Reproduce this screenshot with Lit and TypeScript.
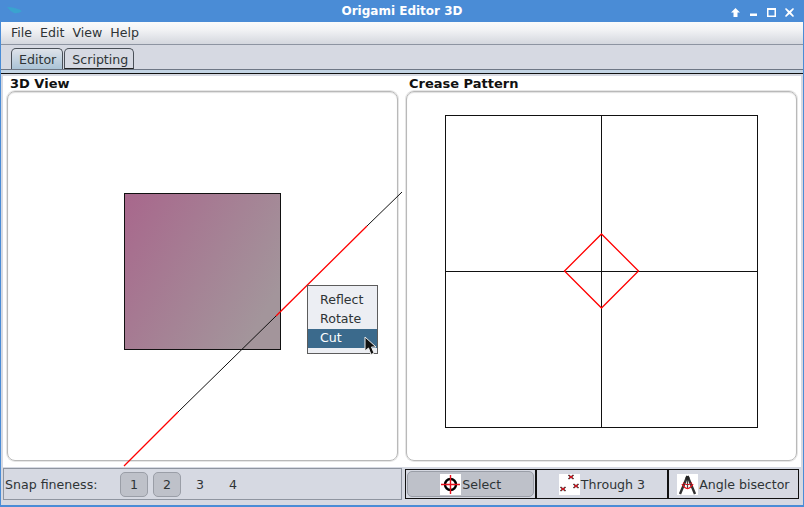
import { LitElement, html, css, svg } from 'lit';
import { customElement } from 'lit/decorators.js';

// icons are small raster-like pictures on a white square in the original
const selectIcon = html`<svg class="icon" width="21" height="21" viewBox="0 0 21 21">
  <rect width="21" height="21" fill="#fff" />
  <circle cx="10.5" cy="10.5" r="5.5" fill="none" stroke="#000" stroke-width="2.4" />
  <path d="M10.5 1V20M1 10.5H20" stroke="#e8101c" stroke-width="1.4" />
</svg>`;

const throughIcon = html`<svg class="icon" width="21" height="21" viewBox="0 0 21 21">
  <rect width="21" height="21" fill="#fff" />
  <path d="M9.500 1l5 4M14.500 1l-5 4M14.500 10l5 4M19.500 10l-5 4M1.500 13l5 4M6.500 13l-5 4" stroke="#222" stroke-width="1.600" />
  <path d="M10 1.500l4 3M14 1.500l-4 3M15 10.500l4 3M19 10.500l-4 3M2 13.500l4 3M6 13.500l-4 3" stroke="#e8101c" stroke-width="1" />
</svg>`;

const bisectorIcon = html`<svg class="icon" width="21" height="21" viewBox="0 0 21 21">
  <rect width="21" height="21" fill="#fff" />
  <path d="M10.500 2L3 20M10.500 2L18 20" stroke="#333" stroke-width="2.400" fill="none" />
  <path d="M10.500 2V14" stroke="#444" stroke-width="1.200" />
  <circle cx="10.500" cy="4" r="2" fill="#222" />
  <path d="M5 10Q10.500 19 16 10" stroke="#e8101c" stroke-width="1.400" fill="none" />
  <path d="M6 8.500Q10.500 13 15 8.500" stroke="#e8101c" stroke-width="1" fill="none" />
</svg>`;

@customElement('context-menu')
class ContextMenu extends LitElement {
  static styles = css`
    :host {
      background: #eceef3;
      border: 1px solid #5c5c5c;
      box-sizing: border-box;
      display: block;
      height: 69px;
      left: 299px;
      padding-top: 5px;
      position: absolute;
      top: 193px;
      width: 71px;
    }

    div {
      color: #2e3436;
      height: 19px;
      line-height: 17px;
      padding-left: 12px;
    }

    .active {
      background: #3b6a8c;
      color: #fff;
    }

    svg {
      left: 56px;
      position: absolute;
      top: 50px;
    }
  `;

  render() {
    return html`
      <div>Reflect</div>
      <div>Rotate</div>
      <div class="active">Cut</div>
      <svg width="14" height="20" viewBox="0 0 14 20">
        <path d="M1 1V15L4.500 12L7 18.500L10 17L7.500 11H12Z" fill="#111" stroke="#eee" stroke-width="1" />
      </svg>
    `;
  }
}

@customElement('app-root')
export class AppRoot extends LitElement {
  static styles = css`
    :host {
      background: #4a8cd6;
      color: #2e3436;
      display: block;
      font-family: 'DejaVu Sans', sans-serif;
      font-size: 12.6px;
      height: 507px;
      overflow: hidden;
      width: 804px;
    }

    .title {
      align-items: center;
      color: #fff;
      display: flex;
      font-size: 12px;
      font-weight: bold;
      height: 22px;
      justify-content: center;
      position: relative;
    }

    .logo {
      left: 6px;
      position: absolute;
      top: 6px;
    }

    .controls {
      position: absolute;
      right: 10px;
      top: 8px;
    }

    .window {
      background: #d6d9e2;
      height: 483px;
      margin: 0 1px;
    }

    .menu {
      background: linear-gradient(#fafbfb, #f2f3f5 35%, #d4d7de);
      border-bottom: 1px solid #8d94a1;
      display: flex;
      gap: 8px;
      height: 22px;
      line-height: 21px;
      padding-left: 10px;
    }

    .tabs {
      border-bottom: 1px solid #6e7785;
      box-sizing: border-box;
      display: flex;
      gap: 1px;
      height: 25px;
      padding: 3px 0 0 10px;
    }

    .tab {
      background: #d6d9e2;
      border: 1px solid #4a5058;
      border-bottom: 1px solid #222;
      border-radius: 5px 5px 0 0;
      box-sizing: border-box;
      color: #2e3436;
      height: 21px;
      line-height: 21px;
      padding: 0 5px 0 7px;
    }

    .tab.current {
      background: linear-gradient(#dfe3ea, #aac3d6);
      border-bottom: 0;
      padding-right: 6px;
    }

    .strip {
      background: #c3d4e4;
      border-bottom: 1px solid #111;
      height: 3px;
    }

    .sheet {
      background: #fff;
      display: grid;
      grid-template-columns: 1fr 1fr;
      height: 391px;
      margin: 2px 2px 0;
    }

    .pane {
      display: flex;
      flex-direction: column;
      padding: 0 4px 6px;
      position: relative;
    }

    .pane h2 {
      color: #111;
      font-size: 13px;
      height: 15px;
      line-height: 15px;
      margin: 0;
      padding-left: 3px;
    }

    .view {
      border: 1px solid #b9b9b9;
      border-radius: 8px;
      box-shadow: 0 0 0 1px #e6e6e6, inset 0 1px 1px #e0e0e0;
      flex: 1;
      position: relative;
    }

    .view svg {
      left: -1px;
      overflow: visible;
      position: absolute;
      top: -1px;
    }

    .status {
      display: flex;
      height: 33px;
      margin: 0 0 0 2px;
      padding-top: 1px;
    }

    .snap {
      align-items: center;
      border: 1px solid #8f95a0;
      box-sizing: border-box;
      display: flex;
      height: 32px;
      padding-left: 1px;
      width: 399px;
    }

    .snap span {
      width: 115px;
    }

    .snap button {
      align-items: center;
      background: none;
      border: 1px solid transparent;
      border-radius: 5px;
      box-sizing: border-box;
      color: #2e3436;
      display: flex;
      font: inherit;
      height: 25px;
      justify-content: center;
      margin-right: 5px;
      padding: 0;
      width: 28px;
    }

    .snap button.on {
      background: #bec1c9;
      border-color: #9a9ea7;
    }

    .tools {
      border: 1px solid #111;
      box-sizing: border-box;
      display: flex;
      height: 30px;
      margin: 1px 0 0 3px;
      width: 394px;
    }

    .tool {
      align-items: center;
      background: none;
      border: 0;
      border-right: 2px solid #111;
      box-sizing: border-box;
      color: #2e3436;
      display: flex;
      flex: 1;
      font: inherit;
      gap: 1px;
      justify-content: center;
      padding: 0;
      position: relative;
    }

    .tool:last-child {
      border-right: 0;
    }

    .tool.on::before {
      background: #bec1c9;
      border: 1px solid #9a9ea7;
      border-radius: 5px;
      content: '';
      inset: 1px;
      position: absolute;
    }

    .tool > * {
      position: relative;
    }

    .icon {
      display: block;
      flex: none;
    }
  `;

  renderFoldView() {
    return html`<svg width="391" height="370" viewBox="0 0 391 370" shape-rendering="crispEdges">
      <defs>
        <linearGradient id="paper" x1="0" y1="0" x2="1" y2="0.6">
          <stop offset="0" stop-color="#a8678c" />
          <stop offset="1" stop-color="#a3959b" />
        </linearGradient>
      </defs>
      <rect x="117.500" y="102.500" width="156" height="156" fill="url(#paper)" stroke="#111" />
      ${svg`<g shape-rendering="auto" fill="none">
        <path d="M395 101L360 135M269 225L171 321" stroke="#111" />
        <path d="M360 135L269 225M171 321L117 375" stroke="#f00" stroke-width="1.300" />
      </g>`}
    </svg>`;
  }

  renderCreaseView() {
    return html`<svg width="391" height="370" viewBox="0 0 391 370" shape-rendering="crispEdges">
      <g stroke="#111" fill="none">
        <rect x="39.500" y="24.500" width="312" height="312" />
        <path d="M195.500 24V336M39 180.500H352" />
      </g>
      <path d="M195.500 143L232.500 180L195.500 217L158.500 180Z" stroke="#f00" stroke-width="1.300" fill="none" shape-rendering="auto" />
    </svg>`;
  }

  render() {
    return html`
      <div class="title">
        <svg class="logo" width="18" height="10" viewBox="0 0 18 10">
          <path d="M1 1Q9 1 16 5Q12 8 8 7Q4 5 1 1Z" fill="#3aa3cf" />
        </svg>
        Origami Editor 3D
        <svg class="controls" width="63" height="9" viewBox="0 0 63 9" fill="#fff">
          <path d="M4.500 0L9 4.500H6.500V9H2.500V4.500H0Z" />
          <rect x="19" y="5.500" width="7" height="2.500" />
          <path d="M36 0H45V9H36ZM37.500 2V7.500H43.500V2Z" fill-rule="evenodd" />
          <path d="M55 0L58.500 3L62 0L63 1L60 4.500L63 8L62 9L58.500 6L55 9L54 8L57 4.500L54 1Z" />
        </svg>
      </div>
      <div class="window">
        <nav class="menu">
          <span>File</span><span>Edit</span><span>View</span><span>Help</span>
        </nav>
        <div class="tabs">
          <div class="tab current">Editor</div>
          <div class="tab">Scripting</div>
        </div>
        <div class="strip"></div>
        <main class="sheet">
          <section class="pane">
            <h2>3D View</h2>
            <div class="view">
              ${this.renderFoldView()}
              <context-menu></context-menu>
            </div>
          </section>
          <section class="pane">
            <h2>Crease Pattern</h2>
            <div class="view">${this.renderCreaseView()}</div>
          </section>
        </main>
        <footer class="status">
          <div class="snap">
            <span>Snap fineness:</span>
            <button class="on">1</button>
            <button class="on">2</button>
            <button>3</button>
            <button>4</button>
          </div>
          <div class="tools">
            <button class="tool on">${selectIcon}<span>Select</span></button>
            <button class="tool">${throughIcon}<span>Through 3</span></button>
            <button class="tool">${bisectorIcon}<span>Angle bisector</span></button>
          </div>
        </footer>
      </div>
    `;
  }
}
